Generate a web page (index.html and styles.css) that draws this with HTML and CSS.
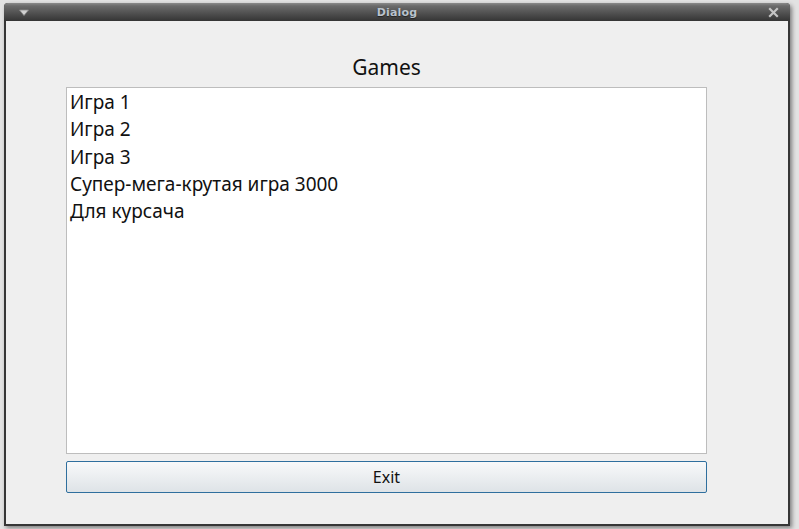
FILE: index.html
```html
<!DOCTYPE html>
<html>
<head>
<meta charset="utf-8">
<link rel="stylesheet" href="styles.css">
</head>
<body>
<div class="desk">
  <div class="window">
    <div class="titlebar">
      <svg class="menu-ico" width="12" height="8" viewBox="0 0 12 8"><path d="M1.5 1 H10.5 L6 6.5 Z" fill="#d0d0d0" stroke="#8a8a8a" stroke-width="0.8"/></svg>
      <span class="title">Dialog</span>
      <svg class="close-ico" width="11" height="11" viewBox="0 0 11 11"><path d="M2 2 L9 9 M9 2 L2 9" stroke="#c4c4c4" stroke-width="2.2" stroke-linecap="square"/></svg>
    </div>
    <div class="content">
      <div class="heading">Games</div>
      <div class="list">
        <div class="item">Игра 1</div>
        <div class="item">Игра 2</div>
        <div class="item">Игра 3</div>
        <div class="item">Супер-мега-крутая игра 3000</div>
        <div class="item">Для курсача</div>
      </div>
      <button class="exit">Exit</button>
    </div>
  </div>
</div>
</body>
</html>
```
FILE: styles.css
```css
html, body {
  margin: 0;
  padding: 0;
  background: #e4e4e4;
}
.desk {
  width: 799px;
  height: 529px;
  padding: 3px 0 0 4px;
  box-sizing: border-box;
  background: #e2e2e2;
}
.window {
  width: 786px;
  height: 523px;
  display: flex;
  flex-direction: column;
  box-shadow: 2px 2px 4px rgba(0,0,0,0.45);
  border-radius: 4px 4px 0 0;
  background: #363636;
}
.titlebar {
  height: 18px;
  flex: none;
  position: relative;
  display: flex;
  align-items: center;
  justify-content: center;
  background: linear-gradient(#8a8a8a 0px, #6a6a6a 3px, #4a4a4a 12px, #353535 18px);
  border-radius: 4px 4px 0 0;
}
.title {
  font-family: "DejaVu Sans", sans-serif;
  font-weight: bold;
  font-size: 11px;
  color: #b9c2cc;
  text-shadow: 0 1px 1px #222;
  letter-spacing: 0.2px;
}
.menu-ico {
  position: absolute;
  left: 14px;
  top: 6px;
}
.close-ico {
  position: absolute;
  right: 11px;
  top: 4px;
}
.content {
  flex: 1;
  margin: 0 2px 2px 2px;
  background: #efefef;
  padding: 29px 81px 0 60px;
  display: flex;
  flex-direction: column;
  font-family: "Noto Sans", sans-serif;
}
.heading {
  font-size: 21px;
  text-align: center;
  line-height: 35px;
  height: 37px;
  color: #111;
}
.list {
  height: 364px;
  background: #fff;
  border: 1px solid #bdbdbd;
  padding: 1px 3px 0 3px;
  font-size: 19px;
  color: #111;
}
.item {
  line-height: 27.25px;
}
.exit {
  margin-top: 7px;
  height: 32px;
  border: 1px solid #2f6f9e;
  border-radius: 2px;
  background: linear-gradient(#f8f9fa, #dee3e7);
  font-family: "Noto Sans", sans-serif;
  font-size: 16px;
  color: #111;
  padding: 0;
}
```
